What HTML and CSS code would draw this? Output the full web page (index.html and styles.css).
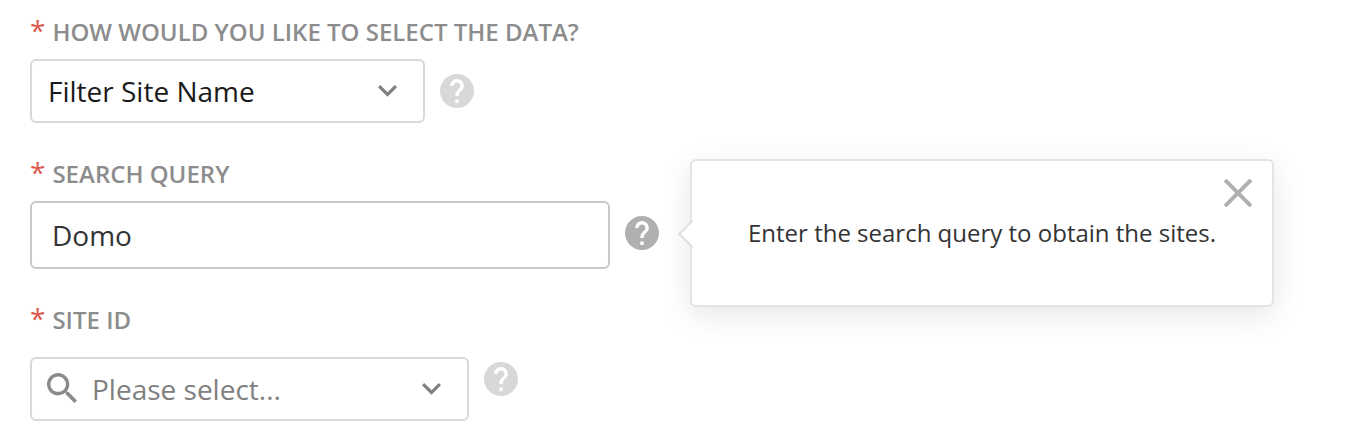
FILE: index.html
```html
<!DOCTYPE html>
<html lang="en">
<head>
    <meta charset="UTF-8">
    <meta name="viewport" content="width=device-width, initial-scale=1.0">
    <title>Select Data</title>
    <link rel="stylesheet" href="styles.css">
</head>
<body>
    <svg class="sprite" aria-hidden="true">
        <symbol id="icon-help" viewBox="2 2 20 20">
            <path d="M12 2C6.48 2 2 6.48 2 12s4.480 10 10 10 10-4.480 10-10S17.520 2 12 2zm1 17h-2v-2h2v2zm2.070-7.750l-.9.920C13.450 12.900 13 13.500 13 15h-2v-.5c0-1.100.45-2.100 1.170-2.830l1.240-1.260c.37-.36.59-.86.59-1.410 0-1.100-.9-2-2-2s-2 .9-2 2H8c0-2.210 1.790-4 4-4s4 1.790 4 4c0 .88-.36 1.680-.93 2.250z"/>
        </symbol>
        <symbol id="icon-chevron" viewBox="6 8 12 8">
            <path d="M7.410 8.590L12 13.170l4.590-4.580L18 10l-6 6-6-6z"/>
        </symbol>
    </svg>

    <form class="form">
        <div class="field">
            <label class="label" for="mode"><span class="required">*</span>HOW WOULD YOU LIKE TO SELECT THE DATA?</label>
            <div class="row">
                <div class="select-box mode">
                    <select class="control" id="mode" required>
                        <option>Filter Site Name</option>
                    </select>
                    <svg class="chevron" aria-hidden="true"><use href="#icon-chevron"/></svg>
                </div>
                <button class="help" type="button" aria-label="Help">
                    <svg><use href="#icon-help"/></svg>
                </button>
            </div>
        </div>

        <div class="field">
            <label class="label" for="query"><span class="required">*</span>SEARCH QUERY</label>
            <div class="row">
                <input class="control query" type="text" id="query" value="Domo" required>
                <div class="help-wrap">
                    <button class="help active" type="button" aria-label="Help">
                        <svg><use href="#icon-help"/></svg>
                    </button>
                    <div class="tooltip" role="tooltip">
                        Enter the search query to obtain the sites.
                        <button class="close" type="button" aria-label="Close">
                            <svg viewBox="0 0 28 28"><path d="M1 1l26 26M27 1L1 27"/></svg>
                        </button>
                    </div>
                </div>
            </div>
        </div>

        <div class="field">
            <label class="label" for="site"><span class="required">*</span>SITE ID</label>
            <div class="row site-row">
                <div class="select-box site">
                    <svg class="search" viewBox="3 3 17.500 17.500" aria-hidden="true">
                        <path d="M15.500 14h-.79l-.28-.27C15.410 12.590 16 11.110 16 9.500 16 5.910 13.090 3 9.500 3S3 5.910 3 9.500 5.910 16 9.500 16c1.610 0 3.090-.59 4.230-1.570l.27.28v.79l5 4.990L20.490 19l-4.990-5zm-6 0C7.010 14 5 11.990 5 9.500S7.010 5 9.500 5 14 7.010 14 9.500 11.990 14 9.500 14z"/>
                    </svg>
                    <select class="control" id="site" required>
                        <option value="">Please select...</option>
                    </select>
                    <svg class="chevron" aria-hidden="true"><use href="#icon-chevron"/></svg>
                </div>
                <button class="help" type="button" aria-label="Help">
                    <svg><use href="#icon-help"/></svg>
                </button>
            </div>
        </div>
    </form>
</body>
</html>
```

FILE: styles.css
```css
* {
    box-sizing: border-box;
}
body {
    font-family: "Open Sans", sans-serif;
    background-color: #fff;
    margin: 0;
}
svg {
    display: block;
    fill: currentColor;
}
button {
    padding: 0;
    border: none;
    background: none;
    cursor: pointer;
}
.sprite {
    display: none;
}
.form {
    display: flex;
    flex-direction: column;
    gap: 34px;
    padding: 15px 30px 27px;
}
.label {
    display: flex;
    gap: 7px;
    margin-bottom: 10px;
    font-size: 24px;
    font-weight: 600;
    line-height: 34px;
    color: #8c8c8c;
}
.required {
    font-size: 28px;
    font-weight: 400;
    line-height: 30px;
    color: #dc5b4f;
}
.row {
    display: flex;
    align-items: center;
    gap: 15px;
}
.control {
    width: 100%;
    height: 64px;
    padding: 0 16px;
    border: 2px solid #d8d8d8;
    border-radius: 6px;
    background-color: #fff;
    font-family: inherit;
    font-size: 28px;
    color: #1a1a1a;
    appearance: none;
}
.select-box {
    position: relative;
}
.mode {
    width: 395px;
}
.site {
    width: 439px;
}
.site .control {
    padding-left: 60px;
    color: #808080;
}
.chevron {
    position: absolute;
    right: 28px;
    top: 25px;
    width: 19px;
    height: 13px;
    color: #808080;
    pointer-events: none;
}
.search {
    position: absolute;
    left: 17px;
    top: 16px;
    width: 30px;
    height: 30px;
    color: #8a8a8a;
    pointer-events: none;
}
.query {
    width: 580px;
    height: 68px;
    padding: 0 20px;
    border-color: #c8c8c8;
    color: #333;
}
.help {
    display: block;
    color: #d8d8d8;
}
.help svg {
    width: 34px;
    height: 34px;
}
.help.active {
    color: #b0b0b0;
}
.help-wrap {
    position: relative;
    margin-bottom: 4px;
}
.site-row {
    align-items: flex-start;
    margin-top: 20px;
}
.site-row .help {
    margin-top: 5px;
}

/* tooltip */
.tooltip {
    position: absolute;
    left: 100%;
    top: 50%;
    transform: translateY(-50%);
    margin-left: 31px;
    padding: 55px 56px 56px;
    border: 2px solid #e4e4e4;
    border-radius: 6px;
    background-color: #fff;
    box-shadow: 0 8px 30px rgba(0, 0, 0, 0.1);
    font-size: 24px;
    line-height: 33px;
    white-space: nowrap;
    color: #333;
}
.tooltip::before {
    content: "";
    position: absolute;
    left: -10px;
    top: 50%;
    width: 18px;
    height: 18px;
    margin-top: -9px;
    border-left: 2px solid #e0e0e0;
    border-bottom: 2px solid #e0e0e0;
    background-color: #fff;
    transform: rotate(45deg);
}
.close {
    position: absolute;
    top: 18px;
    right: 20px;
}
.close svg {
    width: 28px;
    height: 28px;
    fill: none;
    stroke: #b0b0b0;
    stroke-width: 4;
}
```
